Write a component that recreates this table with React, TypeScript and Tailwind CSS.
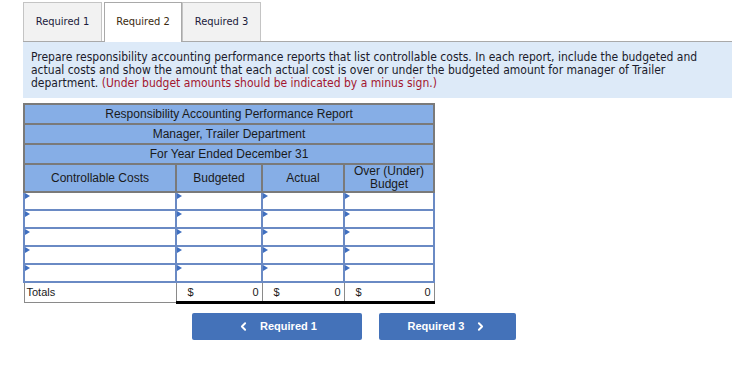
import { ChevronLeft, ChevronRight } from "lucide-react";

const tahoma = { fontFamily: '"DejaVu Sans Condensed", "DejaVu Sans", sans-serif' };

const tabs = ["Required 1", "Required 2", "Required 3"];

function InputCell() {
  return (
    <td className="relative h-[18px] border-2 border-[#6a8ac4] bg-white p-0">
      <span className="absolute left-0 top-0 h-0 w-0 border-y-[3px] border-l-[5px] border-y-transparent border-l-[#3f6fc0]" />
    </td>
  );
}

export default function App() {
  return (
    <div className="min-h-screen bg-white pt-[2px] text-[#1a1a1a]" style={{ fontFamily: '"Liberation Sans", Arial, sans-serif' }}>
      {/* tab strip */}
      <div className="ml-[23px] flex w-[709px] border-b border-[#a9a9a9]" style={tahoma}>
        {tabs.map((t, i) => (
          <div
            key={t}
            className={
              i === 1
                ? "-mb-px ml-[2px] flex h-[40px] w-[78px] items-center justify-center border border-b-0 border-[#a9a9a9] bg-white text-[11px] text-[#3a2a10]"
                : "flex h-[39px] w-[79px] items-center justify-center border border-[#c4c4c4] border-b-0 bg-[#f2f2f2] text-[11px] text-[#1a1a3a]"
            }
          >
            {t}
          </div>
        ))}
      </div>

      {/* instructions */}
      <div className="ml-[23px] w-[709px] bg-[#ddeaf8] px-[8px] pb-[8px] pt-[9px] text-[12px] leading-[13px] text-[#1b1b2b]" style={tahoma}>
        <p className="whitespace-nowrap">
          Prepare responsibility accounting performance reports that list controllable costs. In each report, include the budgeted and
          <br />
          actual costs and show the amount that each actual cost is over or under the budgeted amount for manager of Trailer
          <br />
          department. <span className="text-[#a3162f]">(Under budget amounts should be indicated by a minus sign.)</span>
        </p>
      </div>

      {/* report table */}
      <table className="ml-[23px] mt-[5px] w-[410px] table-fixed border-collapse text-[12px]">
        <colgroup>
          <col className="w-[152px]" />
          <col className="w-[86px]" />
          <col className="w-[82px]" />
          <col className="w-[90px]" />
        </colgroup>
        <thead>
          <tr>
            <th colSpan={4} className="h-[19px] border-2 border-[#7a7a7a] bg-[#86aee6] p-0 font-normal">
              Responsibility Accounting Performance Report
            </th>
          </tr>
          <tr>
            <th colSpan={4} className="h-[19px] border-x-2 border-b-2 border-[#7a7a7a] bg-[#86aee6] p-0 font-normal">
              Manager, Trailer Department
            </th>
          </tr>
          <tr>
            <th colSpan={4} className="h-[19px] border-x-2 border-b-2 border-[#7a7a7a] bg-[#86aee6] p-0 font-normal">
              For Year Ended December 31
            </th>
          </tr>
          <tr>
            <th className="h-[27px] border-2 border-[#7a7a7a] bg-[#86aee6] p-0 font-normal">Controllable Costs</th>
            <th className="border-2 border-[#7a7a7a] bg-[#86aee6] p-0 font-normal">Budgeted</th>
            <th className="border-2 border-[#7a7a7a] bg-[#86aee6] p-0 font-normal">Actual</th>
            <th className="border-2 border-[#7a7a7a] bg-[#86aee6] p-0 font-normal leading-[13px]">
              Over (Under)
              <br />
              Budget
            </th>
          </tr>
        </thead>
        <tbody>
          {[0, 1, 2, 3, 4].map((r) => (
            <tr key={r}>
              <InputCell />
              <InputCell />
              <InputCell />
              <InputCell />
            </tr>
          ))}
          <tr className="text-[11px]">
            <td className="h-[20px] border-x border-b border-[#8a8a8a] px-[2px] py-0">Totals</td>
            {[0, 1, 2].map((c) => (
              <td key={c} className="border-x border-b-[3px] border-x-[#8a8a8a] border-b-black p-0">
                <div className="flex justify-between pl-[11px] pr-[3px]">
                  <span>$</span>
                  <span>0</span>
                </div>
              </td>
            ))}
          </tr>
        </tbody>
      </table>

      {/* navigation */}
      <div className="ml-[192px] mt-[9px] flex gap-[17px]">
        <button className="flex h-[27px] w-[170px] items-center justify-center gap-[10px] rounded-[2px] bg-[#4472b9] text-[11px] font-bold text-white">
          <ChevronLeft className="h-[13px] w-[13px]" strokeWidth={3.5} />
          Required 1
        </button>
        <button className="flex h-[27px] w-[137px] items-center justify-center gap-[10px] rounded-[2px] bg-[#4472b9] text-[11px] font-bold text-white">
          Required 3
          <ChevronRight className="h-[13px] w-[13px]" strokeWidth={3.5} />
        </button>
      </div>
    </div>
  );
}
